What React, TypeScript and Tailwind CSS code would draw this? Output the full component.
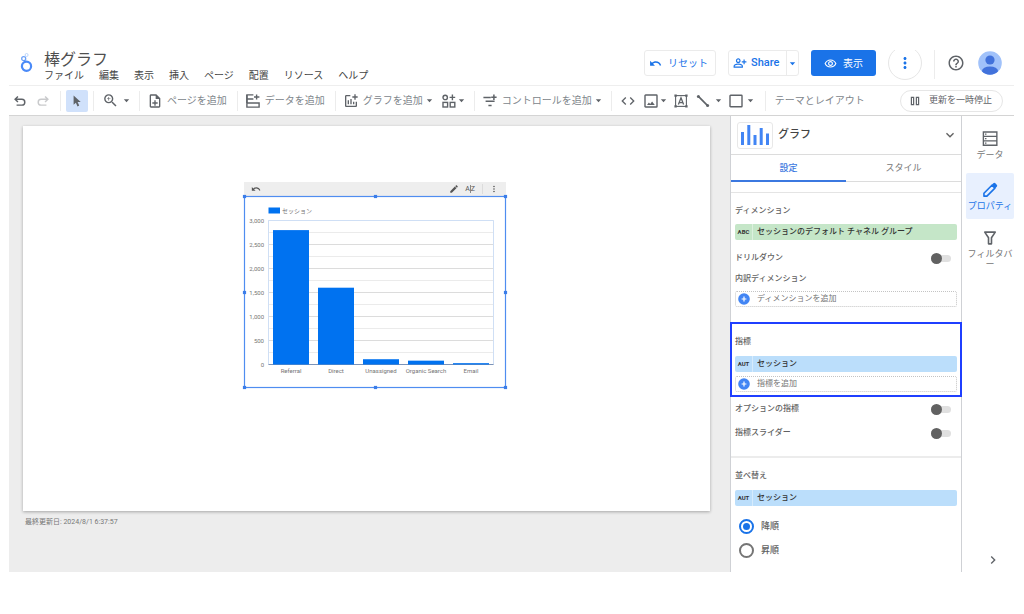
import type { ReactNode } from "react";
import {
  MdAddchart,
  MdChevronRight,
  MdCode,
  MdEdit,
  MdHelpOutline,
  MdKeyboardArrowDown,
  MdMoreVert,
  MdOutlineNoteAdd,
  MdOutlinePersonAddAlt,
  MdOutlineRemoveRedEye,
  MdUndo,
  MdZoomIn,
} from "react-icons/md";

const menus = ["ファイル", "編集", "表示", "挿入", "ページ", "配置", "リソース", "ヘルプ"];

const sessions = [
  { label: "Referral", value: 2800 },
  { label: "Direct", value: 1600 },
  { label: "Unassigned", value: 110 },
  { label: "Organic Search", value: 80 },
  { label: "Email", value: 28 },
];

function Caret() {
  return (
    <svg viewBox="0 0 9 9" className="size-[9px] shrink-0" fill="currentColor" aria-hidden="true">
      <path d="M1.8 3.2h5.4L4.5 6.3z" />
    </svg>
  );
}

function Separator() {
  return <span className="h-5 w-px shrink-0 bg-[#ececec]" />;
}

function Icon({ children, className = "size-[14px]" }: { children: ReactNode; className?: string }) {
  return (
    <svg
      viewBox="0 0 14 14"
      className={`shrink-0 ${className}`}
      fill="none"
      stroke="currentColor"
      strokeWidth="1.4"
      aria-hidden="true"
    >
      {children}
    </svg>
  );
}

function Logo() {
  return (
    <svg viewBox="0 0 14 22" className="mt-0.5 h-[22px] w-[14px] shrink-0" fill="none" aria-label="Looker Studio">
      <circle cx="7.6" cy="3" r="1.5" stroke="#b5d1fb" strokeWidth="0.9" />
      <circle cx="4.7" cy="6.7" r="2" stroke="#6ba1f8" strokeWidth="1.3" />
      <circle cx="7.5" cy="14.3" r="4.6" stroke="#4a8af8" strokeWidth="2.2" />
      <path d="M5 8.5l1 1.8" stroke="#4a8af8" strokeWidth="1.2" />
    </svg>
  );
}

function Header() {
  return (
    <header className="flex h-9 items-start overflow-hidden border-b border-[#eeeeee] pl-[10px] pr-3">
      <Logo />
      <div className="ml-[11px] mt-px whitespace-nowrap">
        <h1 className="text-base leading-[18px] text-[#4f4f4f]">棒グラフ</h1>
        <nav className="flex gap-[15px] text-[10px] leading-[14px] text-[#444]">
          {menus.map((m) => (
            <button key={m} type="button">
              {m}
            </button>
          ))}
        </nav>
      </div>
      <div className="ml-auto flex shrink-0 items-start gap-3 whitespace-nowrap text-[#1a73e8]">
        <button type="button" className="flex h-[26px] w-[72px] items-center gap-1.5 rounded-[3px] border border-[#ebebeb] pl-1 text-[10px]">
          <MdUndo className="size-[13px]" />
          リセット
        </button>
        <div className="flex h-[26px] w-[71px] items-center rounded-[3px] border border-[#ebebeb]">
          <button type="button" className="flex h-full flex-1 items-center gap-1 border-r border-[#ebebeb] pl-1 text-[11px] font-medium">
            <MdOutlinePersonAddAlt className="size-[14px]" />
            Share
          </button>
          <button type="button" aria-label="共有オプション" className="px-px">
            <Caret />
          </button>
        </div>
        <button type="button" className="flex h-[26px] w-[65px] items-center justify-center gap-1.5 rounded-[3px] bg-[#1a73e8] text-[10px] text-white">
          <MdOutlineRemoveRedEye className="size-[13px]" />
          表示
        </button>
        <button type="button" aria-label="その他" className="-mt-1 flex size-[34px] items-center justify-center rounded-full border border-[#e6e6e6]">
          <MdMoreVert className="size-[18px]" />
        </button>
        <span className="h-[29px] w-px bg-[#ececec]" />
        <button type="button" aria-label="ヘルプ" className="flex h-[26px] items-center pr-px text-[#5f6368]">
          <MdHelpOutline className="size-[18px]" />
        </button>
        <button type="button" aria-label="アカウント" className="mt-px">
          <svg viewBox="0 0 24 24" className="size-6">
            <defs>
              <clipPath id="avatar">
                <circle cx="12" cy="12" r="11.8" />
              </clipPath>
            </defs>
            <g clipPath="url(#avatar)">
              <rect width="24" height="24" fill="#a1c2fa" />
              <circle cx="12" cy="9" r="4.6" fill="#4272db" />
              <ellipse cx="12" cy="20" rx="8" ry="4.6" fill="#4272db" />
            </g>
          </svg>
        </button>
      </div>
    </header>
  );
}

function Toolbar() {
  return (
    <div className="flex h-[30px] items-center whitespace-nowrap border-b border-[#d4d4d4] text-[10px] text-[#5f6368]">
      <div className="flex shrink-0 gap-[11px] pl-[5px] pr-[11px]">
        <button type="button" aria-label="元に戻す">
          <Icon className="size-3">
            <path d="M4.6 1.8L1.3 5l3.3 3.2M1.5 5h7.7a3.4 3.4 0 0 1 0 6.8H3" strokeWidth="1.7" />
          </Icon>
        </button>
        <button type="button" aria-label="やり直す" className="text-[#c9cacc]">
          <Icon className="size-3">
            <path d="M9.4 1.8L12.7 5 9.4 8.2M12.5 5H4.8a3.4 3.4 0 0 0 0 6.8H11" strokeWidth="1.7" />
          </Icon>
        </button>
      </div>
      <Separator />
      <button type="button" aria-label="選択" className="mx-[5px] flex h-[22px] w-[22px] shrink-0 items-center justify-center rounded-[2px] bg-[#d0e1fb]">
        <svg viewBox="0 0 14 14" className="size-[14px]" fill="currentColor">
          <path d="M3.6 1.6v9.2l2.3-2 1.6 3.6 1.7-.8-1.6-3.5 3.1-.2z" />
        </svg>
      </button>
      <Separator />
      <button type="button" aria-label="ズーム" className="flex shrink-0 items-center gap-[3px] py-1 pl-2 pr-2">
        <MdZoomIn className="size-[17px]" />
        <Caret />
      </button>
      <Separator />
      <button type="button" className="flex shrink-0 items-center gap-1 pl-[7px] pr-[10px] text-[#80868b]">
        <MdOutlineNoteAdd className="size-4 text-[#5f6368]" />
        ページを追加
      </button>
      <Separator />
      <button type="button" className="flex shrink-0 items-center gap-[5px] pl-2 pr-[10px] text-[#80868b]">
        <Icon className="size-[14px] text-[#5f6368]">
          <path d="M7.4.9H.9v12.2h12.2V9H.9M.9 5h6.5M3 5v0M10.6.4v5.2M8 3h5.4" />
          <path d="M.9 9V.9" />
        </Icon>
        データを追加
      </button>
      <Separator />
      <button type="button" className="flex shrink-0 items-center gap-1 pl-[7px] text-[#80868b]">
        <MdAddchart className="size-4 text-[#5f6368]" />
        グラフを追加
        <span className="-ml-0.5 text-[#5f6368]">
          <Caret />
        </span>
      </button>
      <button type="button" aria-label="コミュニティ ビジュアリゼーション" className="flex shrink-0 items-center gap-px px-2">
        <Icon>
          <circle cx="3.2" cy="3.4" r="2.2" />
          <path d="M10.4.6v5.6M7.6 3.4h5.6" />
          <rect x="1" y="8.4" width="4.6" height="4.6" />
          <rect x="8.2" y="8.4" width="4.6" height="4.6" />
        </Icon>
        <Caret />
      </button>
      <Separator />
      <button type="button" className="flex shrink-0 items-center gap-[5px] px-2 text-[#80868b]">
        <Icon className="size-[14px] text-[#5f6368]">
          <path d="M.4 3.6h7.4M2.6 7.2h9M5.4 11.4h3.2M10.9.6v5.4M8.2 3.3h5.4" strokeWidth="1.5" />
        </Icon>
        コントロールを追加
        <span className="-ml-[3px] text-[#5f6368]">
          <Caret />
        </span>
      </button>
      <Separator />
      <button type="button" aria-label="URL 埋め込み" className="shrink-0 pl-2">
        <MdCode className="size-4" />
      </button>
      <button type="button" aria-label="画像" className="ml-2 flex shrink-0 items-center gap-px">
        <Icon>
          <rect x="1" y="1" width="12" height="12" rx="0.6" />
          <path d="M3 11l1.900-2.500 1.300 1.500 1.900-2.400 2.700 3.400z" fill="currentColor" stroke="none" />
        </Icon>
        <Caret />
      </button>
      <button type="button" aria-label="テキスト" className="ml-1.5 shrink-0">
        <Icon>
          <rect x="1.6" y="1.6" width="10.8" height="10.8" strokeWidth="1.1" />
          <path d="M4.4 10.6L7 3.8l2.6 6.8M5.2 8.6h3.6" strokeWidth="1.3" />
          <path d="M.4.4h2.4v2.4H.4zM11.2.4h2.4v2.4h-2.4zM.4 11.2h2.4v2.4H.4zM11.2 11.2h2.4v2.4h-2.4z" fill="currentColor" stroke="none" />
        </Icon>
      </button>
      <button type="button" aria-label="線" className="ml-2 flex shrink-0 items-center gap-1">
        <Icon>
          <path d="M2.4 2.4l9.2 9.2" strokeWidth="1.7" />
          <circle cx="2.4" cy="2.4" r="1.5" fill="currentColor" stroke="none" />
          <circle cx="11.6" cy="11.6" r="1.5" fill="currentColor" stroke="none" />
        </Icon>
        <Caret />
      </button>
      <button type="button" aria-label="図形" className="ml-1.5 flex shrink-0 items-center gap-[3px] pr-[10px]">
        <Icon>
          <rect x="1" y="1.2" width="12" height="11.6" rx="0.6" />
        </Icon>
        <Caret />
      </button>
      <Separator />
      <button type="button" className="shrink-0 px-[9px] text-[#80868b]">
        テーマとレイアウト
      </button>
      <button type="button" className="ml-auto mr-[11px] flex h-[22px] shrink-0 items-center gap-2 rounded-full border border-[#e6e6e6] pl-2 pr-[10px] text-[9px]">
        <Icon className="size-3">
          <path d="M2.800 2.800h2.600v8.400H2.800zM8.600 2.800h2.600v8.400H8.600z" />
        </Icon>
        更新を一時停止
      </button>
    </div>
  );
}

function SessionChart() {
  const left = 24;
  const right = 249;
  const bottom = 168;
  const scale = 144 / 3000;
  const handles = [
    [0, 0],
    [131, 0],
    [261, 0],
    [0, 96],
    [261, 96],
    [0, 191],
    [131, 191],
    [261, 191],
  ];
  return (
    <svg viewBox="0 0 262 192" className="block h-[192px] w-[262px] overflow-visible" role="img" aria-label="セッションの棒グラフ">
      <g transform="translate(0.5 0.5)">
        <rect width="261" height="191" fill="#fff" stroke="#4f8df0" strokeWidth="1.2" />
        {Array.from({ length: 13 }, (_, i) => (
          <line key={i} x1={left} x2={right} y1={bottom - i * 12} y2={bottom - i * 12} stroke={i % 2 ? "#ebebeb" : "#dcdcdc"} />
        ))}
        <path d={`M${left} ${bottom}V24H${right}V${bottom}`} fill="none" stroke="#cfdff5" />
        <line x1={left} x2={right} y1={bottom} y2={bottom} stroke="#7b93b8" />
        {sessions.map((s, i) => (
          <g key={s.label}>
            <rect x={28.5 + i * 45} y={bottom - s.value * scale} width="36" height={s.value * scale} fill="#0072f0" />
            <text x={46.5 + i * 45} y="176.5" textAnchor="middle" fontSize="6" fill="#757575">
              {s.label}
            </text>
          </g>
        ))}
        {["0", "500", "1,000", "1,500", "2,000", "2,500", "3,000"].map((t, i) => (
          <text key={t} x="19.5" y={bottom - i * 24 + 2} textAnchor="end" fontSize="6" fill="#757575">
            {t}
          </text>
        ))}
        <rect x="24" y="11" width="11.5" height="6" fill="#0072f0" />
        <text x="37.5" y="16" fontSize="6" fill="#757575">
          セッション
        </text>
        {handles.map(([x, y]) => (
          <rect key={`${x}-${y}`} x={x - 1.6} y={y - 1.6} width="3.2" height="3.2" fill="#3b7de9" />
        ))}
      </g>
    </svg>
  );
}

function Canvas() {
  return (
    <main className="min-w-0 flex-1 bg-[#ededed] pl-[14px] pr-5 pt-[10px]">
      <div className="relative aspect-[688/386] bg-white shadow-[0_1px_3px_rgba(0,0,0,0.3)]">
        <div className="absolute left-[221px] top-14">
          <div className="flex h-[14px] items-center bg-[#eeeeee] pl-[7px] pr-[7px] text-[#555]">
            <button type="button" aria-label="リセット">
              <MdUndo className="size-[10px]" />
            </button>
            <button type="button" aria-label="編集" className="ml-auto">
              <MdEdit className="size-[10px]" />
            </button>
            <button type="button" aria-label="並べ替え" className="ml-1.5 flex items-center text-[7px] leading-[10px]">
              A<span className="h-2 w-px bg-[#888]" />Z
            </button>
            <span className="ml-[7px] h-[10px] w-px bg-[#dcdcdc]" />
            <button type="button" aria-label="その他" className="ml-1.5">
              <MdMoreVert className="size-[10px]" />
            </button>
          </div>
          <SessionChart />
        </div>
      </div>
      <p className="mt-[5px] pl-0.5 text-[7px] leading-[12px] text-[#777]">最終更新日: 2024/8/1 6:37:57</p>
    </main>
  );
}

function Field({ type, name, tone }: { type: string; name: string; tone: string }) {
  return (
    <button type="button" className={`flex h-4 w-full items-center rounded-[2px] text-[#333] ${tone}`}>
      <span className="flex h-full w-[18px] items-center justify-center border-r border-white/40 text-[6px] font-bold">{type}</span>
      <span className="ml-1">{name}</span>
    </button>
  );
}

function AddField({ label }: { label: string }) {
  return (
    <button type="button" className="mt-1 flex h-4 w-full items-center gap-[7px] rounded-[2px] border border-dotted border-[#c4c4c4] pl-0.5 font-normal text-[#757575]">
      <svg viewBox="0 0 12 12" className="size-3" aria-hidden="true">
        <circle cx="6" cy="6" r="5.8" fill="#4285f4" />
        <path d="M6 3.6v4.8M3.6 6h4.8" stroke="#fff" strokeWidth="1.2" />
      </svg>
      {label}
    </button>
  );
}

function Toggle({ label }: { label: string }) {
  return (
    <label className="flex h-4 items-center justify-between pr-1.5">
      {label}
      <input
        type="checkbox"
        className="h-[7px] w-5 appearance-none rounded-full bg-[#e0e0e0] before:-mt-0.5 before:block before:size-[11px] before:rounded-full before:bg-[#616161] before:content-['']"
      />
    </label>
  );
}

function Radio({ label, checked }: { label: string; checked?: boolean }) {
  return (
    <label className="flex h-4 items-center gap-[7px] pl-1 text-[9px]">
      <input
        type="radio"
        name="sort"
        defaultChecked={checked}
        className="size-[15px] appearance-none rounded-full border-2 border-[#757575] bg-clip-content p-[2px] checked:border-[#1a73e8] checked:bg-[#1a73e8]"
      />
      {label}
    </label>
  );
}

function PropertyPanel() {
  return (
    <aside className="w-[232px] shrink-0 border-x border-[#cfd1d5] text-[8px] font-medium leading-4 text-[#616161]">
      <div className="flex h-[39px] items-center border-b border-[#dcdcdc] pl-1.5 pr-[3px]">
        <div className="flex h-[27px] w-9 items-center justify-center rounded-[3px] border border-[#e8e8e8]">
          <svg viewBox="0 0 30 22" className="h-[22px] w-[30px]" fill="#4285f4" aria-hidden="true">
            <rect x="1" y="8" width="3" height="13" />
            <rect x="7.3" y="1" width="3" height="20" />
            <rect x="13.5" y="11" width="3" height="10" />
            <rect x="19.7" y="4" width="3" height="17" />
            <rect x="26" y="9.5" width="3" height="11.5" />
          </svg>
        </div>
        <h2 className="ml-[5px] text-[11px] text-[#444]">グラフ</h2>
        <button type="button" aria-label="折りたたむ" className="ml-auto">
          <MdKeyboardArrowDown className="size-4" />
        </button>
      </div>
      <div role="tablist" className="flex h-[27px] border-b border-[#dcdcdc] text-[9px]">
        <button type="button" role="tab" aria-selected="true" className="-mb-px flex-1 border-b-2 border-[#3b78e0] text-[#3b78e0]">
          設定
        </button>
        <button type="button" role="tab" aria-selected="false" className="flex-1 font-normal text-[#757575]">
          スタイル
        </button>
      </div>
      <section className="mt-[10px] border-t border-[#e4e4e4] px-1 pb-[14px] pt-[10px]">
        <h3 className="mb-[5px]">ディメンション</h3>
        <Field type="ABC" name="セッションのデフォルト チャネル グループ" tone="bg-[#c5e6c8]" />
        <div className="mt-[10px]">
          <Toggle label="ドリルダウン" />
        </div>
        <h3 className="mt-[5px]">内訳ディメンション</h3>
        <AddField label="ディメンションを追加" />
      </section>
      <section className="-mx-px mt-px border-2 border-[#1f3fff] px-[3px] pb-[3px] pt-[10px]">
        <h3 className="mb-1.5">指標</h3>
        <Field type="AUT" name="セッション" tone="bg-[#bbdefb]" />
        <AddField label="指標を追加" />
      </section>
      <section className="flex flex-col gap-2 border-b-2 border-[#ececec] px-1 pb-[15px] pt-1">
        <Toggle label="オプションの指標" />
        <Toggle label="指標スライダー" />
      </section>
      <section className="px-1 pb-3 pt-[10px]">
        <h3 className="mb-1.5">並べ替え</h3>
        <Field type="AUT" name="セッション" tone="bg-[#bbdefb]" />
        <div className="mt-3 flex flex-col gap-2">
          <Radio label="降順" checked />
          <Radio label="昇順" />
        </div>
      </section>
    </aside>
  );
}

function Rail() {
  return (
    <nav className="flex w-[52px] shrink-0 flex-col gap-[5px] pl-1 pt-[9px] text-[9px] leading-[10px] text-[#757575]">
      <button type="button" className="flex flex-col items-center gap-[3px] pb-2 pt-1.5">
        <Icon className="size-4 text-[#5f6368]">
          <path d="M1.200.9h11.800v11.600H1.200zM1.200 4.700h11.800M1.200 8.600h11.800" strokeWidth="1.2" />
          <path d="M2.600 2.800h1.300M2.600 6.700h1.300M2.600 10.600h1.300" strokeWidth="1.1" />
        </Icon>
        データ
      </button>
      <button type="button" className="flex flex-col items-center gap-[3px] whitespace-nowrap rounded-[2px] bg-[#e8f0fe] pb-2 pt-[9px] text-[#1a73e8]">
        <Icon className="size-4">
          <path d="M1.700 12.400V9.800L8.700 2.800l2.600 2.600-7 7z" strokeLinejoin="round" />
          <path d="M8.600 2.400l1.300-1.300a1.300 1.300 0 0 1 1.800 0l1.200 1.200a1.300 1.300 0 0 1 0 1.800l-1.300 1.300z" fill="currentColor" stroke="none" />
        </Icon>
        プロパティ
      </button>
      <button type="button" className="flex flex-col items-center gap-[3px] pb-2 pt-1.5">
        <Icon className="size-4 text-[#5f6368]">
          <path d="M2.400 1.900h9.200L8.300 6.800v5.300H5.700V6.800z" strokeLinejoin="round" />
        </Icon>
        <span className="[line-break:anywhere]">フィルタバー</span>
      </button>
      <button type="button" aria-label="パネルを閉じる" className="mb-1 ml-1.5 mt-auto self-center text-[#5f6368]">
        <MdChevronRight className="size-4" />
      </button>
    </nav>
  );
}

export default function App() {
  return (
    <div className="flex min-h-screen flex-col bg-white pb-[42px] pl-[9px] pr-[10px] pt-[50px] font-[Roboto,'Noto_Sans_CJK_JP',sans-serif]">
      <Header />
      <Toolbar />
      <div className="flex flex-1">
        <Canvas />
        <PropertyPanel />
        <Rail />
      </div>
    </div>
  );
}
